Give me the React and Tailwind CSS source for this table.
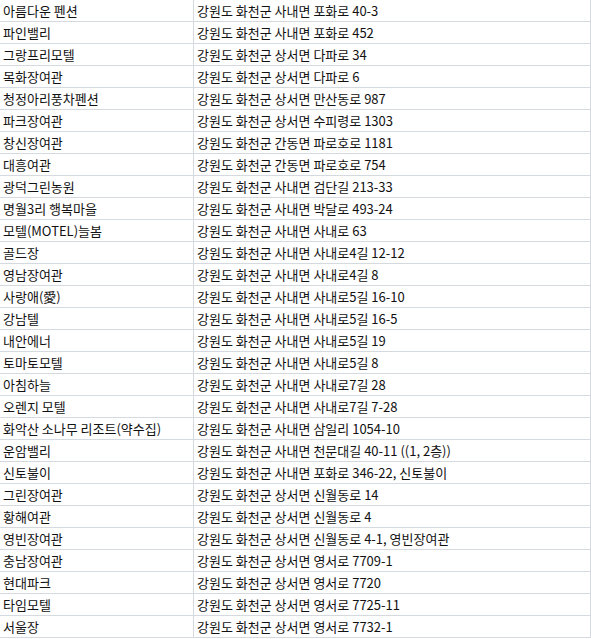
import React from 'react';

const rows = [
    ['아름다운 펜션', '강원도 화천군 사내면 포화로 40-3'],
    ['파인밸리', '강원도 화천군 사내면 포화로 452'],
    ['그랑프리모텔', '강원도 화천군 상서면 다파로 34'],
    ['목화장여관', '강원도 화천군 상서면 다파로 6'],
    ['청정아리풍차펜션', '강원도 화천군 상서면 만산동로 987'],
    ['파크장여관', '강원도 화천군 상서면 수피령로 1303'],
    ['창신장여관', '강원도 화천군 간동면 파로호로 1181'],
    ['대흥여관', '강원도 화천군 간동면 파로호로 754'],
    ['광덕그린농원', '강원도 화천군 사내면 검단길 213-33'],
    ['명월3리 행복마을', '강원도 화천군 사내면 박달로 493-24'],
    ['모텔(MOTEL)늘봄', '강원도 화천군 사내면 사내로 63'],
    ['골드장', '강원도 화천군 사내면 사내로4길 12-12'],
    ['영남장여관', '강원도 화천군 사내면 사내로4길 8'],
    ['사랑애(愛)', '강원도 화천군 사내면 사내로5길 16-10'],
    ['강남텔', '강원도 화천군 사내면 사내로5길 16-5'],
    ['내안에너', '강원도 화천군 사내면 사내로5길 19'],
    ['토마토모텔', '강원도 화천군 사내면 사내로5길 8'],
    ['아침하늘', '강원도 화천군 사내면 사내로7길 28'],
    ['오렌지 모텔', '강원도 화천군 사내면 사내로7길 7-28'],
    ['화악산 소나무 리조트(약수집)', '강원도 화천군 사내면 삼일리 1054-10'],
    ['운암밸리', '강원도 화천군 사내면 천문대길 40-11 ((1, 2층))'],
    ['신토불이', '강원도 화천군 사내면 포화로 346-22, 신토불이'],
    ['그린장여관', '강원도 화천군 상서면 신월동로 14'],
    ['황해여관', '강원도 화천군 상서면 신월동로 4'],
    ['영빈장여관', '강원도 화천군 상서면 신월동로 4-1, 영빈장여관'],
    ['충남장여관', '강원도 화천군 상서면 영서로 7709-1'],
    ['현대파크', '강원도 화천군 상서면 영서로 7720'],
    ['타임모텔', '강원도 화천군 상서면 영서로 7725-11'],
    ['서울장', '강원도 화천군 상서면 영서로 7732-1'],
];

const App = () => {
    return (
        <div className="w-[591px] bg-white text-[13px] text-[#111] font-['Malgun_Gothic','Noto_Sans_CJK_KR',sans-serif]">
            {rows.map(([name, addr], i) => (
                <div key={i} className="flex h-[22px] border-b border-[#d5d9e0]">
                    <div className="w-[194px] shrink-0 border-r border-[#d5d9e0] pl-[3px] flex items-center whitespace-nowrap overflow-hidden">
                        {name}
                    </div>
                    <div className="w-[397px] shrink-0 border-r border-[#d5d9e0] pl-[3px] flex items-center whitespace-nowrap overflow-hidden">
                        {addr}
                    </div>
                </div>
            ))}
        </div>
    );
};

export default App;
